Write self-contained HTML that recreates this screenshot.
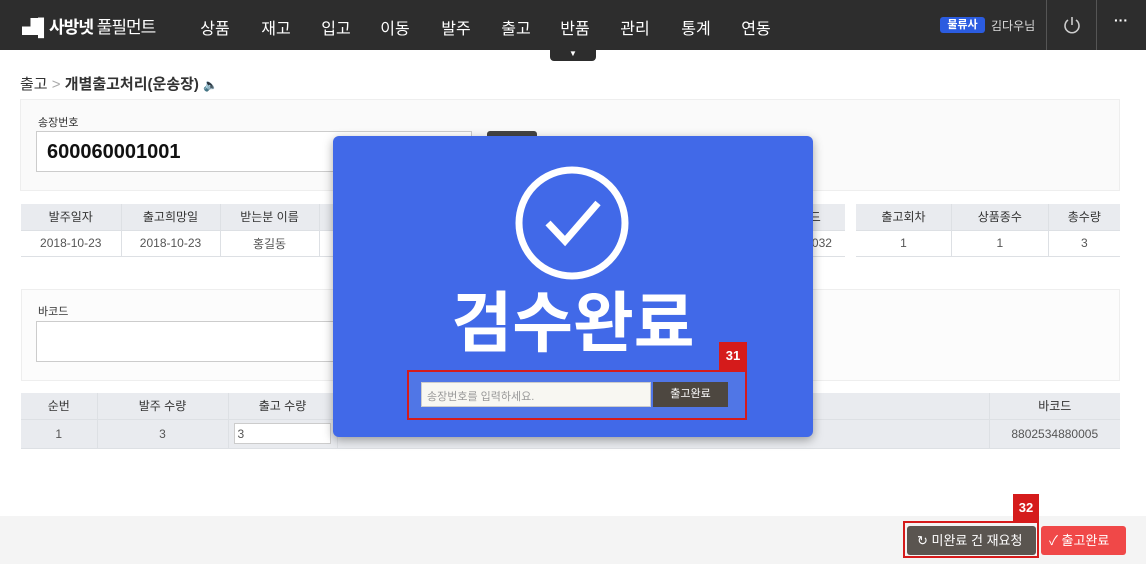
<!DOCTYPE html>
<html><head><meta charset="utf-8"><style>
*{box-sizing:border-box;margin:0;padding:0}
body{width:1146px;height:564px;overflow:hidden;background:#fff;font-family:"Liberation Sans","Noto Sans CJK KR",sans-serif;position:relative;color:#333}
.a{position:absolute}
.nav{left:0;top:0;width:1146px;height:50px;background:#2d2d2d}
.menu{top:15px;color:#fff;font-size:16px;transform:translateX(-50%)}
table{border-collapse:collapse;position:absolute;font-size:12px}
td{text-align:center;border-right:1px solid #dde0e4;height:26px}
tr.h td{background:#e9ebef;color:#333}
tr.r td{border-top:1px solid #dde0e4;border-bottom:1px solid #dde0e4;color:#555}
.blue{color:#2a6bc8}
</style></head><body>
<div class="a nav"></div>
<div class="a" style="left:22px;top:13px;color:#fff;font-size:17px;font-weight:bold;letter-spacing:-1px">▟▌사방넷 <span style="font-weight:normal">풀필먼트</span></div>
<div class="a menu" style="left:215px">상품</div><div class="a menu" style="left:276px">재고</div><div class="a menu" style="left:336px">입고</div><div class="a menu" style="left:395px">이동</div><div class="a menu" style="left:456px">발주</div><div class="a menu" style="left:516px">출고</div><div class="a menu" style="left:575px">반품</div><div class="a menu" style="left:635px">관리</div><div class="a menu" style="left:696px">통계</div><div class="a menu" style="left:756px">연동</div>
<div class="a" style="left:550px;top:48px;width:46px;height:13px;background:#2d2d2d;border-radius:0 0 4px 4px;color:#fff;font-size:8px;text-align:center;line-height:11px">▼</div>
<div class="a" style="left:940px;top:17px;width:45px;height:16px;background:#2b5ce0;border-radius:3px;color:#fff;font-size:11px;font-weight:bold;text-align:center;line-height:16px">물류사</div>
<div class="a" style="left:991px;top:17px;color:#ddd;font-size:12px">김다우님</div>
<div class="a" style="left:1046px;top:0;width:1px;height:50px;background:#555"></div>
<div class="a" style="left:1096px;top:0;width:1px;height:50px;background:#555"></div>
<svg class="a" style="left:1062px;top:15px" width="20" height="20" viewBox="0 0 20 20"><path d="M6 5A7 7 0 1 0 14 5" fill="none" stroke="#ccc" stroke-width="1.6"/><path d="M10 2V10" stroke="#ccc" stroke-width="1.6"/></svg>
<div class="a" style="left:1114px;top:12px;color:#fff;font-size:14px;font-weight:bold">···</div>
<div class="a" style="left:20px;top:73px;font-size:15px;color:#333">출고 <span style="color:#aaa">&gt;</span> <b style="color:#333">개별출고처리(운송장)</b> <span style="font-size:12px">🔈</span></div>
<div class="a" style="left:20px;top:99px;width:1100px;height:92px;background:#fafafa;border:1px solid #eee"></div>
<div class="a" style="left:38px;top:114px;font-size:11px">송장번호</div>
<div class="a" style="left:36px;top:131px;width:436px;height:41px;background:#fff;border:1px solid #ccc;font-size:20px;font-weight:bold;color:#111;padding:9px 10px">600060001001</div>
<div class="a" style="left:487px;top:131px;width:50px;height:41px;background:#444;border-radius:3px"></div>
<table style="left:21px;top:204px;width:824px"><tr class="h"><td style="width:100px">발주일자</td><td style="width:99px">출고희망일</td><td style="width:99px">받는분 이름</td><td></td><td style="width:60px;border-right:0">드</td></tr>
<tr class="r"><td class="blue">2018-10-23</td><td class="blue">2018-10-23</td><td>홍길동</td><td></td><td class="blue" style="border-right:0">00032</td></tr></table>
<table style="left:856px;top:204px;width:264px"><tr class="h"><td>출고회차</td><td>상품종수</td><td style="border-right:0">총수량</td></tr>
<tr class="r"><td class="blue">1</td><td class="blue">1</td><td class="blue" style="border-right:0">3</td></tr></table>
<div class="a" style="left:21px;top:289px;width:1099px;height:92px;background:#fcfcfc;border:1px solid #eee"></div>
<div class="a" style="left:38px;top:303px;font-size:11px">바코드</div>
<div class="a" style="left:36px;top:321px;width:320px;height:41px;background:#fff;border:1px solid #ccc"></div>
<table style="left:21px;top:393px;width:1099px"><tr class="h"><td style="width:76px">순번</td><td style="width:131px">발주 수량</td><td style="width:109px">출고 수량</td><td></td><td style="width:131px;border-right:0">바코드</td></tr>
<tr class="r" style="height:29px"><td style="background:#e9ebef" class="blue">1</td><td style="background:#e9ebef">3</td><td style="background:#e9ebef;text-align:left;padding-left:5px"><div style="width:97px;height:21px;background:#fff;border:1px solid #ccc;padding:3px">3</div></td><td style="background:#e9ebef"></td><td style="background:#e9ebef;border-right:0">8802534880005</td></tr></table>
<div class="a" style="left:0;top:516px;width:1146px;height:48px;background:#f4f4f4"></div>
<div class="a" style="left:903px;top:521px;width:136px;height:37px;border:2px solid #d51b1b"></div>
<div class="a" style="left:1013px;top:494px;width:26px;height:27px;background:#d51b1b;color:#fff;font-size:13px;font-weight:bold;text-align:center;line-height:27px">32</div>
<div class="a" style="left:907px;top:526px;width:129px;height:29px;background:#5a5550;border-radius:3px;color:#fff;font-size:13px;line-height:29px;padding-left:10px">↻ 미완료 건 재요청</div>
<div class="a" style="left:1041px;top:526px;width:85px;height:29px;background:#f04848;border-radius:3px;color:#fff;font-size:13px;line-height:29px;padding-left:8px">✓ 출고완료</div>
<div class="a" style="left:333px;top:136px;width:480px;height:301px;background:#4169e8;border-radius:6px;box-shadow:0 3px 10px rgba(0,0,0,.35)"></div>
<svg class="a" style="left:512px;top:163px" width="120" height="120" viewBox="0 0 120 120"><circle cx="60" cy="60" r="53" fill="none" stroke="#fff" stroke-width="7"/><path d="M36 60L53 78L86 40" fill="none" stroke="#fff" stroke-width="7"/></svg>
<div class="a" style="left:333px;top:283px;width:480px;text-align:center;color:#fff;font-size:66px;font-weight:bold;line-height:80px">검수완료</div>
<div class="a" style="left:407px;top:370px;width:340px;height:50px;border:2px solid #d51b1b;background:#5076e6"></div>
<div class="a" style="left:719px;top:342px;width:28px;height:28px;background:#d51b1b;color:#fff;font-size:13px;font-weight:bold;text-align:center;line-height:28px">31</div>
<div class="a" style="left:421px;top:382px;width:230px;height:25px;background:#f8f7f2;border:1px solid #ccc;font-size:11px;color:#999;padding:5px 5px">송장번호를 입력하세요.</div>
<div class="a" style="left:653px;top:382px;width:75px;height:25px;background:#4d4740;color:#fff;font-size:11px;text-align:center;line-height:25px">출고완료</div>
</body></html>
